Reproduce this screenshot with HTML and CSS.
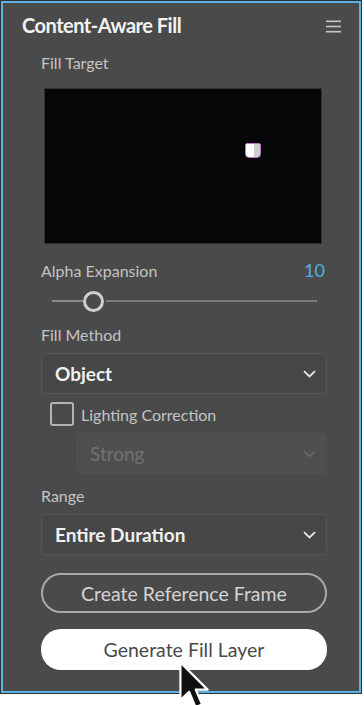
FILE: index.html
```html
<!DOCTYPE html>
<html lang="en">
<head>
    <meta charset="UTF-8">
    <meta name="viewport" content="width=device-width, initial-scale=1.0">
    <title>Content-Aware Fill</title>
    <link rel="stylesheet" href="styles.css">
</head>
<body>
    <div class="panel">
        <div class="panel-header">
            <h1>Content-Aware Fill</h1>
            <svg class="menu-icon" width="15" height="13" viewBox="0 0 15 13">
                <rect x="0" y="0.5" width="15" height="1.6" fill="#c8c8c8"/>
                <rect x="0" y="5.7" width="15" height="1.6" fill="#c8c8c8"/>
                <rect x="0" y="10.9" width="15" height="1.6" fill="#c8c8c8"/>
            </svg>
        </div>

        <div class="panel-body">
            <div class="label">Fill Target</div>
            <div class="preview">
                <div class="target-blob"></div>
            </div>

            <div class="label-row">
                <span class="label">Alpha Expansion</span>
                <span class="value">10</span>
            </div>
            <div class="slider">
                <div class="track track-left"></div>
                <div class="thumb"></div>
                <div class="track track-right"></div>
            </div>

            <div class="label label-method">Fill Method</div>
            <div class="dropdown">
                <span>Object</span>
                <svg class="chevron" width="13" height="8" viewBox="0 0 13 8"><path d="M1 1.2 L6.5 6.5 L12 1.2" fill="none" stroke="#e8e8e8" stroke-width="1.8"/></svg>
            </div>

            <label class="check-row">
                <span class="checkbox"></span>
                <span class="check-label">Lighting Correction</span>
            </label>
            <div class="dropdown dropdown-disabled">
                <span>Strong</span>
                <svg class="chevron" width="13" height="8" viewBox="0 0 13 8"><path d="M1 1.2 L6.5 6.5 L12 1.2" fill="none" stroke="#686868" stroke-width="1.6"/></svg>
            </div>

            <div class="label label-range">Range</div>
            <div class="dropdown">
                <span>Entire Duration</span>
                <svg class="chevron" width="13" height="8" viewBox="0 0 13 8"><path d="M1 1.2 L6.5 6.5 L12 1.2" fill="none" stroke="#e8e8e8" stroke-width="1.8"/></svg>
            </div>

            <button class="btn btn-outline">Create Reference Frame</button>
            <button class="btn btn-primary">Generate Fill Layer</button>
        </div>
    </div>

    <!-- mouse pointer resting on the primary button -->
    <svg class="cursor" width="34" height="51" viewBox="0 0 14 21">
        <path d="M1 1 L1 16.5 L4.6 13.1 L7.2 19.4 L9.9 18.3 L7.3 12.2 L12.2 12.2 Z" fill="#111" stroke="#fff" stroke-width="0.9" stroke-linejoin="round"/>
    </svg>
</body>
</html>
```

FILE: styles.css
```css
* {
    margin: 0;
    padding: 0;
    box-sizing: border-box;
}

body {
    width: 364px;
    height: 705px;
    background: #fff;
    font-family: Lato, 'Open Sans', sans-serif;
    overflow: hidden;
    position: relative;
}

.panel {
    width: 362px;
    height: 694px;
    background: #4a4a4a;
    border: 1px solid #2f2f2f;
    box-shadow: inset 0 0 0 2px #5cb2e4;
}

.panel-header {
    display: flex;
    justify-content: space-between;
    align-items: flex-start;
    padding: 12px 20px 0 21px;
}

.panel-header h1 {
    font-size: 20px;
    line-height: 24px;
    font-weight: 700;
    letter-spacing: -0.5px;
    color: #f2f2f2;
}

.menu-icon {
    margin-top: 7px;
}

.panel-body {
    display: flex;
    flex-direction: column;
    padding: 0 34px 0 40px;
}

.label {
    font-size: 16px;
    line-height: 20px;
    color: #c4c4c4;
}

.panel-body > .label:first-child {
    margin-top: 16px;
}

/* black frame thumbnail */
.preview {
    position: relative;
    width: 278px;
    height: 156px;
    margin: 15px 0 0 3px;
    background: #040608;
    border: 1px solid #333;
}

.target-blob {
    position: absolute;
    left: 200px;
    top: 54px;
    width: 16px;
    height: 15px;
    background: linear-gradient(to right, #fff 55%, #cfcfcf 55%);
    border: 1px solid #b77bbd;
    border-radius: 2px 2px 4px 4px;
}

.label-row {
    display: flex;
    justify-content: space-between;
    align-items: baseline;
    height: 20px;
    margin-top: 16px;
    padding-right: 2px;
}

.value {
    font-size: 18px;
    line-height: 20px;
    color: #4fb1e8;
}

.slider {
    display: flex;
    align-items: center;
    height: 20px;
    margin-top: 11px;
    padding: 0 10px 0 11px;
}

.track {
    height: 2px;
    background: #8a8a8a;
}

.track-left {
    width: 31px;
}

.track-right {
    flex: 1;
    margin-left: 2px;
    background: #7c7c7c;
}

.thumb {
    width: 21px;
    height: 21px;
    border: 3px solid #cfcfcf;
    border-radius: 50%;
    background: #4a4a4a;
}

.label-method {
    margin-top: 14px;
}

.dropdown {
    display: flex;
    justify-content: space-between;
    align-items: center;
    height: 41px;
    margin-top: 8px;
    padding: 0 10px 0 13px;
    background: #474747;
    border: 1px solid #575757;
    border-radius: 4px;
    font-size: 19px;
    font-weight: 700;
    color: #f0f0f0;
}

.check-row {
    display: flex;
    align-items: center;
    height: 24px;
    margin-top: 8px;
    padding-left: 9px;
}

.checkbox {
    width: 24px;
    height: 24px;
    border: 2px solid #b4b4b4;
    border-radius: 3px;
}

.check-label {
    margin-left: 7px;
    font-size: 16px;
    color: #c4c4c4;
}

.dropdown-disabled {
    margin-top: 7px;
    margin-left: 35px;
    background: #4f4f4f;
    border-color: #4f4f4f;
    font-weight: 400;
    color: #717171;
}

.label-range {
    margin-top: 12px;
}

.label-range + .dropdown {
    margin-top: 8px;
}

.btn {
    height: 40px;
    border-radius: 20px;
    font-family: inherit;
    font-size: 19.5px;
    cursor: pointer;
}

.btn-outline {
    margin-top: 18px;
    background: transparent;
    border: 2px solid #a9a9a9;
    color: #d4d4d4;
}

.btn-primary {
    height: 41px;
    margin-top: 16px;
    background: #fff;
    border: none;
    color: #4a4a4a;
}

.cursor {
    position: absolute;
    left: 178px;
    top: 660px;
}
```
